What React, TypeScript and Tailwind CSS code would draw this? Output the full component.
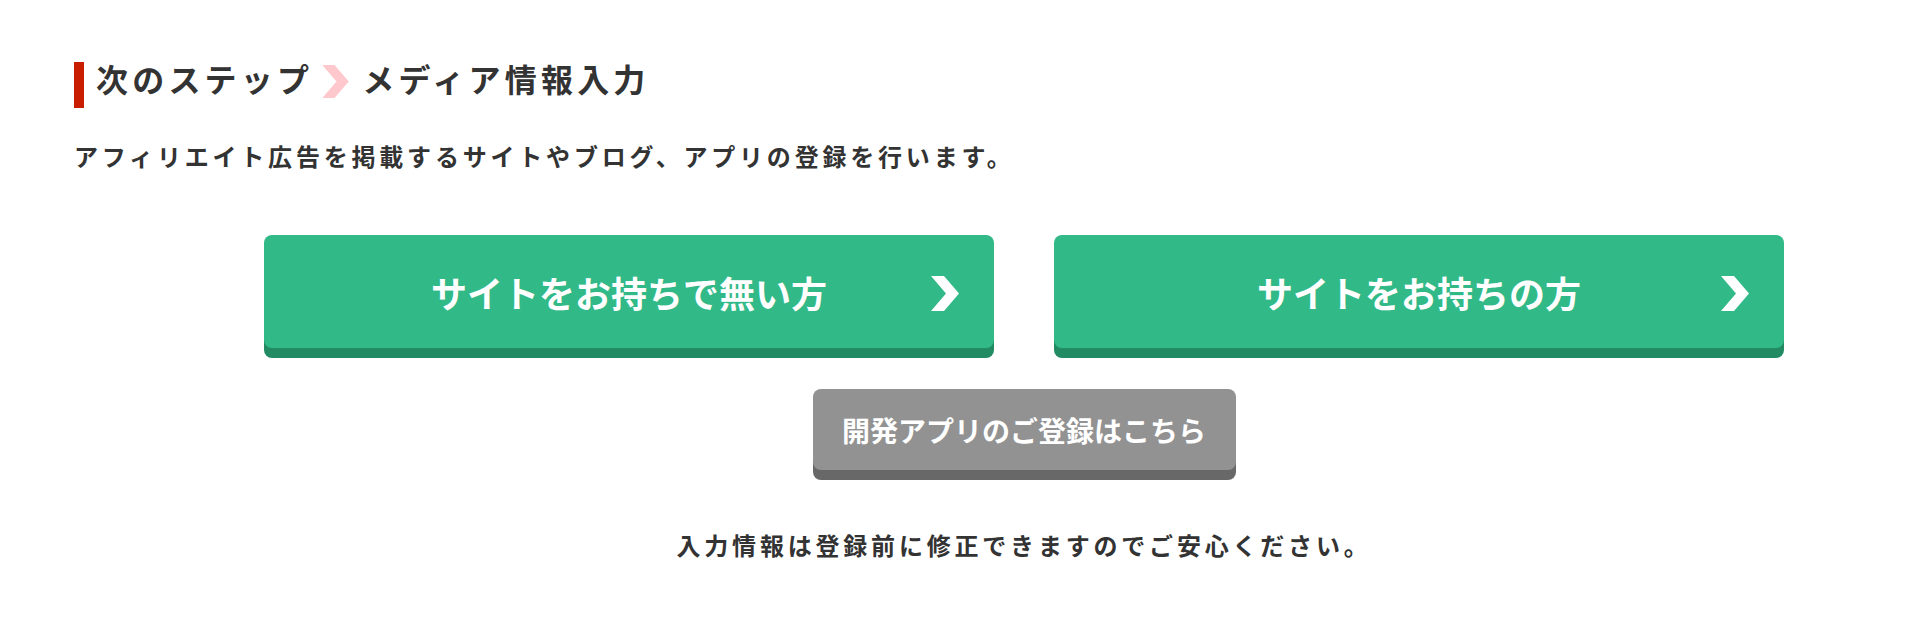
const jp = "font-['Noto_Sans_CJK_JP','Noto_Sans',sans-serif]";

function Chevron({ color, className }: { color: string; className?: string }) {
  return (
    <svg viewBox="0 0 28 35" className={className} aria-hidden="true">
      <polygon points="0,0 13,0 28,17.5 13,35 0,35 15,17.5" fill={color} />
    </svg>
  );
}

function GreenButton({ label }: { label: string }) {
  return (
    <button className="relative flex h-[113px] w-[730px] items-center justify-center rounded-[8px] bg-[#32b988] text-[36px] font-bold leading-none text-white shadow-[0_10px_0_#228b63]">
      <span>{label}</span>
      <Chevron color="#ffffff" className="absolute right-[35px] top-[41px] h-[35px] w-[28px]" />
    </button>
  );
}

export default function App() {
  return (
    <div className={`min-h-screen bg-white pl-[74px] pt-[62px] text-[#333333] ${jp}`}>
      {/* Heading */}
      <h2 className="flex h-[46px] items-start border-l-[10px] border-[#c91d00] pl-[12px] text-[32px] font-bold leading-none tracking-[4.2px]">
        <span>次のステップ</span>
        <Chevron color="#fec8cc" className="ml-[9px] mr-[13px] mt-[3px] h-[33px] w-[27px] shrink-0" />
        <span>メディア情報入力</span>
      </h2>

      <p className="mt-[36px] text-[24px] font-bold leading-none tracking-[3.8px]">
        アフィリエイト広告を掲載するサイトやブログ、アプリの登録を行います。
      </p>

      {/* Actions */}
      <div className="ml-[190px] mt-[67px] flex w-[1520px] flex-col items-center">
        <div className="flex gap-[60px]">
          <GreenButton label="サイトをお持ちで無い方" />
          <GreenButton label="サイトをお持ちの方" />
        </div>

        <button className="mt-[41px] flex h-[81px] w-[423px] items-center justify-center rounded-[8px] bg-[#929292] text-[28px] font-bold leading-none text-white shadow-[0_10px_0_#686868]">
          開発アプリのご登録はこちら
        </button>

        <p className="mt-[63px] text-[24px] font-bold leading-none tracking-[3.8px]">
          入力情報は登録前に修正できますのでご安心ください。
        </p>
      </div>
    </div>
  );
}
